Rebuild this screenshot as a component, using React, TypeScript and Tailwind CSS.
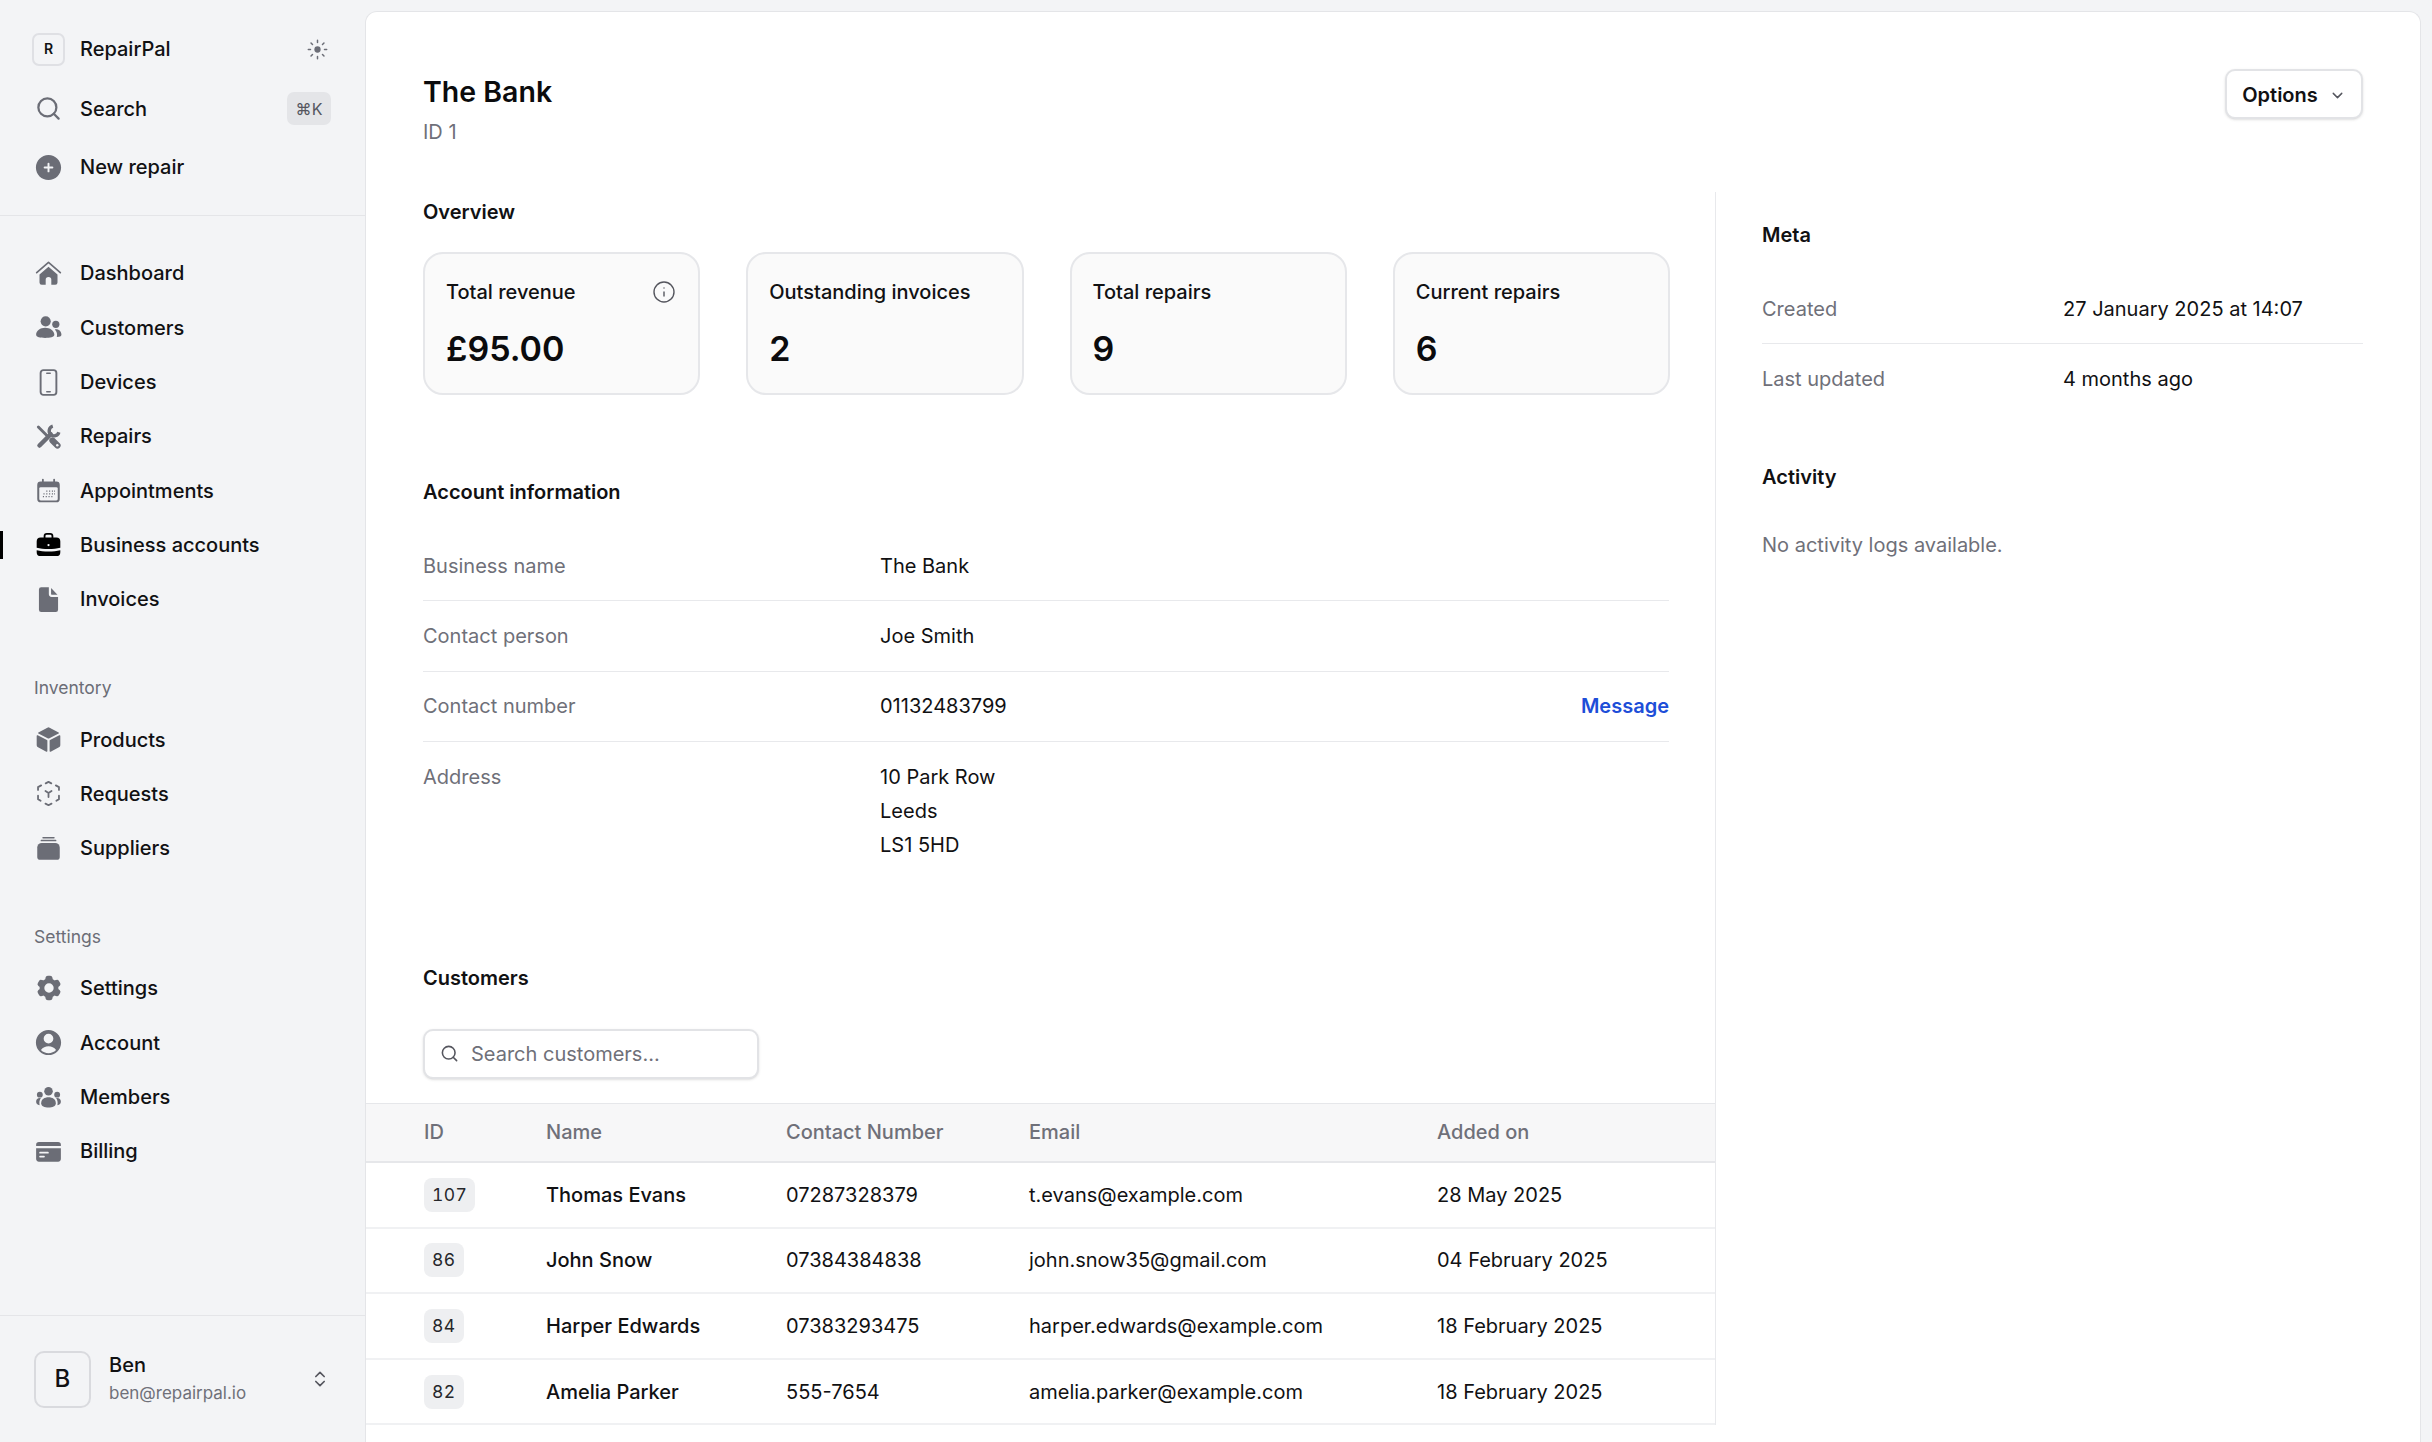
import { ChevronDown, ChevronsUpDown, Info, Search } from "lucide-react";
import { ReactNode } from "react";
import { HiCog6Tooth, HiPlusCircle, HiUserCircle } from "react-icons/hi2";

const iconClass = "w-[27px] h-[27px] shrink-0";

function HomeIcon() {
  return (
    <svg viewBox="0 0 24 24" className={iconClass} fill="currentColor">
      <path d="M1.500 11.200 12 2.200l10.500 9" fill="none" stroke="currentColor" strokeWidth="1.500" strokeLinecap="round" strokeLinejoin="round" />
      <path d="M12 6 4 12.800V20a2 2 0 0 0 2 2h3.500v-4.500a2.500 2.500 0 0 1 5 0V22H18a2 2 0 0 0 2-2v-7.200z" />
    </svg>
  );
}

function CustomersIcon() {
  return (
    <svg viewBox="0 0 24 24" className={iconClass} fill="currentColor">
      <circle cx="9.500" cy="6.500" r="4.500" />
      <circle cx="18.500" cy="9.200" r="3.200" />
      <path d="M1 18.500c0-3.800 3.800-6.300 8-6.300s8.200 2.500 8.200 6.300c0 2.200-3.800 2.800-8.200 2.800s-8-.6-8-2.800z" />
      <path d="M17.600 13.800c3-.7 5.900 1.400 5.900 4.600 0 1.400-1.600 1.900-4.100 2 .5-2.400.2-4.700-1.800-6.600z" />
    </svg>
  );
}

function DeviceIcon() {
  return (
    <svg viewBox="0 0 24 24" className={iconClass} fill="none" stroke="currentColor" strokeWidth="1.700">
      <rect x="5" y="1" width="14" height="22" rx="2.500" />
      <path d="M10.500 3.800h3M10.500 20.200h3" strokeLinecap="round" strokeWidth="1.400" />
    </svg>
  );
}

function RepairsIcon() {
  return (
    <svg viewBox="0 0 24 24" className={iconClass} fill="none" stroke="currentColor" strokeLinecap="round">
      <path d="M3 3.500 11 11.500" strokeWidth="2.600" />
      <path d="m15.500 15.500 4.500 4.500" strokeWidth="5.500" />
      <path d="M4 20 14 10" strokeWidth="4" />
      <path d="M15.800 2.800A4.370 4.370 0 1 0 21.200 8.200" strokeWidth="3" strokeLinecap="butt" />
      <circle cx="19.800" cy="19.800" r="1.100" fill="#f3f4f6" stroke="none" />
    </svg>
  );
}

function CalendarIcon() {
  return (
    <svg viewBox="0 0 24 24" className={iconClass} fill="currentColor">
      <path d="M7 1.500a.8.8 0 0 1 .8.8V4h8.400V2.300a.8.8 0 0 1 1.600 0V4H19a3 3 0 0 1 3 3v12.500a3 3 0 0 1-3 3H5a3 3 0 0 1-3-3V7a3 3 0 0 1 3-3h1.200V2.300a.8.8 0 0 1 .8-.8z" />
      <rect x="3.800" y="9" width="16.400" height="11.800" rx="1.300" fill="#f3f4f6" />
      <path d="M10 12.500h1M12.500 12.500h1M15 12.500h1M17 12.500h.8M7.500 15h1M10 15h1M12.500 15h1M15 15h1M17 15h.8M7 17.500h1M9.500 17.500h1M12 17.500h1M14.500 17.500h1" stroke="currentColor" strokeWidth="1.100" />
    </svg>
  );
}

function BriefcaseIcon() {
  return (
    <svg viewBox="0 0 24 24" className={iconClass} fill="currentColor">
      <path d="M8.500 6.500V4.500a2 2 0 0 1 2-2h3a2 2 0 0 1 2 2v2" fill="none" stroke="currentColor" strokeWidth="1.600" />
      <path d="M5 5.800h14a3.500 3.500 0 0 1 3.500 3.500v5.500c-3 .8-6.500 1.300-10.500 1.300S4.500 15.600 1.500 14.800V9.300A3.500 3.500 0 0 1 5 5.800z" />
      <path d="M1.500 17c3 .8 6.500 1.300 10.500 1.300s7.500-.5 10.500-1.300v1.800a3.500 3.500 0 0 1-3.500 3.500H5a3.500 3.500 0 0 1-3.500-3.500z" />
      <circle cx="12" cy="12.500" r="1" fill="#f3f4f6" />
    </svg>
  );
}

function InvoiceIcon() {
  return (
    <svg viewBox="0 0 24 24" className={iconClass} fill="currentColor">
      <path d="M5.500 1h6.800v6.200a2.500 2.500 0 0 0 2.500 2.500h5.700v11.300a2 2 0 0 1-2 2H5.500a2 2 0 0 1-2-2V3a2 2 0 0 1 2-2z" />
      <path d="M14.300 1.800 20 7.700h-5.200a.5.500 0 0 1-.5-.5z" />
    </svg>
  );
}

function CubeIcon() {
  return (
    <svg viewBox="0 0 24 24" className={iconClass} fill="currentColor">
      <path d="M11 1.500a2 2 0 0 1 2 0l8 4.200a.6.6 0 0 1 0 1L12.400 11a1 1 0 0 1-.8 0L3 6.700a.6.6 0 0 1 0-1z" />
      <path d="M1.500 8.800a.6.6 0 0 1 .9-.5l8.200 4.100a.8.8 0 0 1 .4.700v9.200a.6.6 0 0 1-.9.500l-7.400-3.900a2 2 0 0 1-1.200-1.800z" />
      <path d="M22.500 8.800a.6.6 0 0 0-.9-.5l-8.200 4.100a.8.8 0 0 0-.4.700v9.200a.6.6 0 0 0 .9.500l7.400-3.900a2 2 0 0 0 1.200-1.800z" />
    </svg>
  );
}

function RequestsIcon() {
  return (
    <svg viewBox="0 0 24 24" className={iconClass} fill="none" stroke="currentColor" strokeWidth="1.600" strokeLinecap="round" strokeLinejoin="round">
      <path d="m9.500 3 2.500-1.300L14.500 3M18.500 4.800l2.800 1.500v2.500M21.300 14v3l-2.300 1.400M2.700 14v3L5 18.400M2.700 8.800V6.300l2.800-1.500M9.300 21l2.700 1.400 2.700-1.400" />
      <path d="m9.300 9.800 2.700 1.700 2.700-1.700M12 11.500v3.700" />
    </svg>
  );
}

function SuppliersIcon() {
  return (
    <svg viewBox="0 0 24 24" className={iconClass} fill="currentColor">
      <rect x="6.500" y="1.800" width="11" height="1.300" rx=".6" />
      <rect x="5" y="4.300" width="14" height="1.300" rx=".6" />
      <path d="M6 7h12a4 4 0 0 1 4 4v8.500a2.500 2.500 0 0 1-2.500 2.500h-15A2.500 2.500 0 0 1 2 19.500V11a4 4 0 0 1 4-4z" />
    </svg>
  );
}

function MembersIcon() {
  return (
    <svg viewBox="0 0 24 24" className={iconClass} fill="currentColor">
      <circle cx="12" cy="6.500" r="3.800" />
      <circle cx="4.300" cy="9.500" r="2.600" />
      <circle cx="19.700" cy="9.500" r="2.600" />
      <path d="M5.500 17c0-3.500 3-5.300 6.500-5.300s6.500 1.800 6.500 5.300c0 2.800-3 3.800-6.500 3.800s-6.500-1-6.500-3.800z" />
      <path d="M1 15.500c0-1.800 1.300-3 3.300-3 .4 0 .7 0 .9.100-.9 1.100-1.400 2.600-1.300 4.400l.2 1.900C2 18.500 1 17.300 1 15.500zM23 15.500c0-1.800-1.300-3-3.300-3-.4 0-.7 0-.9.100.9 1.100 1.400 2.600 1.300 4.400l-.2 1.900c2.100-.4 3.100-1.600 3.100-3.400z" />
    </svg>
  );
}

function BillingIcon() {
  return (
    <svg viewBox="0 0 24 24" className={iconClass} fill="currentColor">
      <path d="M3.500 3.500h17A2.500 2.500 0 0 1 23 6v1H1V6a2.500 2.500 0 0 1 2.500-2.500z" />
      <path d="M1 9h22v9.500a2.500 2.500 0 0 1-2.500 2.500h-17A2.500 2.500 0 0 1 1 18.500z" />
      <path d="M4.500 13h7M4.500 16.500h3.500" stroke="#f3f4f6" strokeWidth="1.500" strokeLinecap="round" />
    </svg>
  );
}

function SunIcon() {
  return (
    <svg viewBox="0 0 24 24" className="w-[21px] h-[21px] text-[#6b6d76]" fill="none" stroke="currentColor" strokeWidth="1.700" strokeLinecap="round">
      <circle cx="12" cy="12" r="3.600" fill="currentColor" stroke="none" />
      <path d="M12 1.500v2.500M12 20v2.500M1.500 12H4M20 12h2.500M4.600 4.600l1.700 1.700M17.700 17.700l1.700 1.700M4.600 19.400l1.700-1.700M17.700 6.300l1.700-1.700" />
    </svg>
  );
}

function NavRow({ icon, label, active }: { icon: ReactNode; label: string; active?: boolean }) {
  return (
    <div className="relative flex items-center h-[54.3px] pl-[35px] gap-[18px] font-medium text-[#111113]">
      {active && <span className="absolute left-0 top-[13px] w-[3px] h-[28px] bg-black" />}
      <span className={active ? "text-black" : "text-[#6b6d76]"}>{icon}</span>
      <span>{label}</span>
    </div>
  );
}

function NavLabel({ children }: { children: ReactNode }) {
  return <div className="mt-[45px] mb-[7px] h-[34px] flex items-center pl-[34px] text-[17.5px] text-[#6b6d76]">{children}</div>;
}

function Stat({ label, value, info }: { label: string; value: string; info?: boolean }) {
  return (
    <div className="h-[143px] rounded-[20px] border-2 border-[#e6e7ea] bg-[#fafafa] pl-[21px] pr-[22px] pt-[23px]">
      <div className="flex items-center justify-between h-[30px] font-medium">
        <span>{label}</span>
        {info && <Info className="w-[24px] h-[24px] text-[#55565e]" strokeWidth={1.4} />}
      </div>
      <div className="mt-[20px] text-[34px] leading-[44px] font-semibold text-[#0b0b0d]">{value}</div>
    </div>
  );
}

function Field({ label, children, right, col, plain }: { label: string; children: ReactNode; right?: ReactNode; col: string; plain?: boolean }) {
  return (
    <div className={plain ? "flex items-center h-[70.3px]" : "flex items-center h-[70.3px] border-b border-[#e8e9ec]"}>
      <span className={`${col} text-[#6f7079]`}>{label}</span>
      <span className="flex-1">{children}</span>
      {right}
    </div>
  );
}

const customers = [
  { id: "107", name: "Thomas Evans", phone: "07287328379", email: "t.evans@example.com", added: "28 May 2025" },
  { id: "86", name: "John Snow", phone: "07384384838", email: "john.snow35@gmail.com", added: "04 February 2025" },
  { id: "84", name: "Harper Edwards", phone: "07383293475", email: "harper.edwards@example.com", added: "18 February 2025" },
  { id: "82", name: "Amelia Parker", phone: "555-7654", email: "amelia.parker@example.com", added: "18 February 2025" },
];

export default function App() {
  return (
    <div className="flex h-screen overflow-hidden bg-[#f3f4f6] font-['Inter',sans-serif] text-[20px] leading-[30px] text-[#111113]">
      <aside className="w-[365px] shrink-0 flex flex-col">
        <div className="pt-[21px] pb-[21px] border-b border-[#e4e5e8]">
          <div className="flex items-center h-[59px] pl-[32px] pr-[37px] pb-[3px] font-medium">
            <span className="w-[33px] h-[33px] rounded-[7px] border-2 border-[#dfe0e4] flex items-center justify-center text-[14px] font-semibold">R</span>
            <span className="ml-[15px] flex-1">RepairPal</span>
            <SunIcon />
          </div>
          <div className="flex items-center h-[57px] pl-[35px] pr-[34px] gap-[18px] font-medium">
            <Search className="w-[27px] h-[27px] text-[#6b6d76]" strokeWidth={2} />
            <span className="flex-1">Search</span>
            <span className="w-[44px] h-[33px] rounded-[7px] bg-[#e4e5e8] flex items-center justify-center text-[16px] font-normal text-[#55565e]">⌘K</span>
          </div>
          <div className="pt-[3px]">
            <NavRow icon={<HiPlusCircle className="w-[31px] h-[31px] -mx-[2px]" />} label="New repair" />
          </div>
        </div>

        <nav className="pt-[30px]">
          <NavRow icon={<HomeIcon />} label="Dashboard" />
          <NavRow icon={<CustomersIcon />} label="Customers" />
          <NavRow icon={<DeviceIcon />} label="Devices" />
          <NavRow icon={<RepairsIcon />} label="Repairs" />
          <NavRow icon={<CalendarIcon />} label="Appointments" />
          <NavRow icon={<BriefcaseIcon />} label="Business accounts" active />
          <NavRow icon={<InvoiceIcon />} label="Invoices" />

          <NavLabel>Inventory</NavLabel>
          <NavRow icon={<CubeIcon />} label="Products" />
          <NavRow icon={<RequestsIcon />} label="Requests" />
          <NavRow icon={<SuppliersIcon />} label="Suppliers" />

          <NavLabel>Settings</NavLabel>
          <NavRow icon={<HiCog6Tooth className="w-[30px] h-[30px] -mx-[1.5px]" />} label="Settings" />
          <NavRow icon={<HiUserCircle className="w-[31px] h-[31px] -mx-[2px]" />} label="Account" />
          <NavRow icon={<MembersIcon />} label="Members" />
          <NavRow icon={<BillingIcon />} label="Billing" />
        </nav>

        <div className="mt-auto h-[127px] shrink-0 border-t border-[#e4e5e8] flex items-center pl-[34px] pr-[35px]">
          <span className="w-[57px] h-[57px] rounded-[10px] border-2 border-[#d9dade] flex items-center justify-center text-[24px] font-medium">B</span>
          <div className="ml-[18px] flex-1">
            <div className="leading-[28px] font-medium">Ben</div>
            <div className="text-[17px] leading-[28px] text-[#6f7079]">ben@repairpal.io</div>
          </div>
          <ChevronsUpDown className="w-[20px] h-[20px] text-[#55565e]" strokeWidth={2} />
        </div>
      </aside>

      <main className="flex-1 mt-[11px] mr-[11px] bg-white border border-b-0 border-[#e4e5e8] rounded-t-[12px] overflow-hidden">
        <header className="h-[180px] pl-[57px] pr-[57px] pt-[57px] flex items-start justify-between">
          <div className="mt-[3px]">
            <h1 className="text-[28.5px] leading-[40px] font-semibold text-[#0b0b0d]">The Bank</h1>
            <p className="mt-[5px] text-[#6f7079]">ID 1</p>
          </div>
          <button className="h-[50px] w-[138px] pt-[2px] rounded-[10px] border-2 border-[#e2e3e6] bg-white shadow-sm flex items-center justify-center gap-[11px] font-semibold">
            Options
            <ChevronDown className="w-[17px] h-[17px] text-[#55565e]" strokeWidth={2} />
          </button>
        </header>

        <div className="flex">
          <div className="w-[1350px] shrink-0 border-r border-[#e8e9ec] pt-[5px]">
            <section className="pl-[57px] pr-[45px]">
              <h2 className="font-semibold">Overview</h2>
              <div className="mt-[25px] grid grid-cols-4 gap-[46px]">
                <Stat label="Total revenue" value="£95.00" info />
                <Stat label="Outstanding invoices" value="2" />
                <Stat label="Total repairs" value="9" />
                <Stat label="Current repairs" value="6" />
              </div>
            </section>

            <section className="pl-[57px] pr-[46px] mt-[82px]">
              <h2 className="font-semibold mb-[24px]">Account information</h2>
              <Field col="w-[457px]" label="Business name">The Bank</Field>
              <Field col="w-[457px]" label="Contact person">Joe Smith</Field>
              <Field col="w-[457px]" label="Contact number" right={<span className="font-semibold text-[#1d4ed8]">Message</span>}>
                01132483799
              </Field>
              <div className="flex pt-[18px]">
                <span className="w-[457px] text-[#6f7079] leading-[34.2px]">Address</span>
                <div className="leading-[34.2px]">
                  <div>10 Park Row</div>
                  <div>Leeds</div>
                  <div>LS1 5HD</div>
                </div>
              </div>
            </section>

            <section className="mt-[100px]">
              <h2 className="font-semibold px-[57px]">Customers</h2>
              <div className="mt-[36px] ml-[57px] w-[336px] h-[50px] rounded-[10px] border-2 border-[#e2e3e6] bg-white shadow-sm flex items-center pl-[15px] gap-[12px] text-[#6f7079]">
                <Search className="w-[19px] h-[19px] text-[#55565e]" strokeWidth={2} />
                <span>Search customers...</span>
              </div>
              <table className="mt-[24px] w-full table-fixed border-collapse">
                <colgroup>
                  <col className="w-[180px]" />
                  <col className="w-[240px]" />
                  <col className="w-[243px]" />
                  <col className="w-[408px]" />
                  <col />
                </colgroup>
                <thead>
                  <tr className="h-[59px] bg-[#f7f7f8] border-t border-b-2 border-[#e6e7ea] text-left text-[#6f7079]">
                    <th className="pl-[58px] font-medium">ID</th>
                    <th className="font-medium">Name</th>
                    <th className="font-medium">Contact Number</th>
                    <th className="font-medium">Email</th>
                    <th className="font-medium">Added on</th>
                  </tr>
                </thead>
                <tbody>
                  {customers.map((c) => (
                    <tr key={c.id} className="h-[65.6px] border-b-2 border-[#f0f1f3]">
                      <td className="pl-[58px]">
                        <span className="inline-flex items-center h-[34px] px-[8px] rounded-[8px] bg-[#eeeff1] text-[17.5px] tracking-[0.4px] text-[#26272b] tabular-nums">
                          {c.id}
                        </span>
                      </td>
                      <td className="font-medium">{c.name}</td>
                      <td>{c.phone}</td>
                      <td>{c.email}</td>
                      <td>{c.added}</td>
                    </tr>
                  ))}
                </tbody>
              </table>
            </section>
          </div>

          <div className="flex-1 pl-[46px] pr-[57px] pt-[28px]">
            <h2 className="font-semibold mb-[24px]">Meta</h2>
            <Field col="w-[301px]" label="Created">27 January 2025 at 14:07</Field>
            <Field plain col="w-[301px]" label="Last updated">4 months ago</Field>
            <h2 className="font-semibold mt-[47px]">Activity</h2>
            <p className="mt-[38px] text-[#6f7079]">No activity logs available.</p>
          </div>
        </div>
      </main>
    </div>
  );
}
